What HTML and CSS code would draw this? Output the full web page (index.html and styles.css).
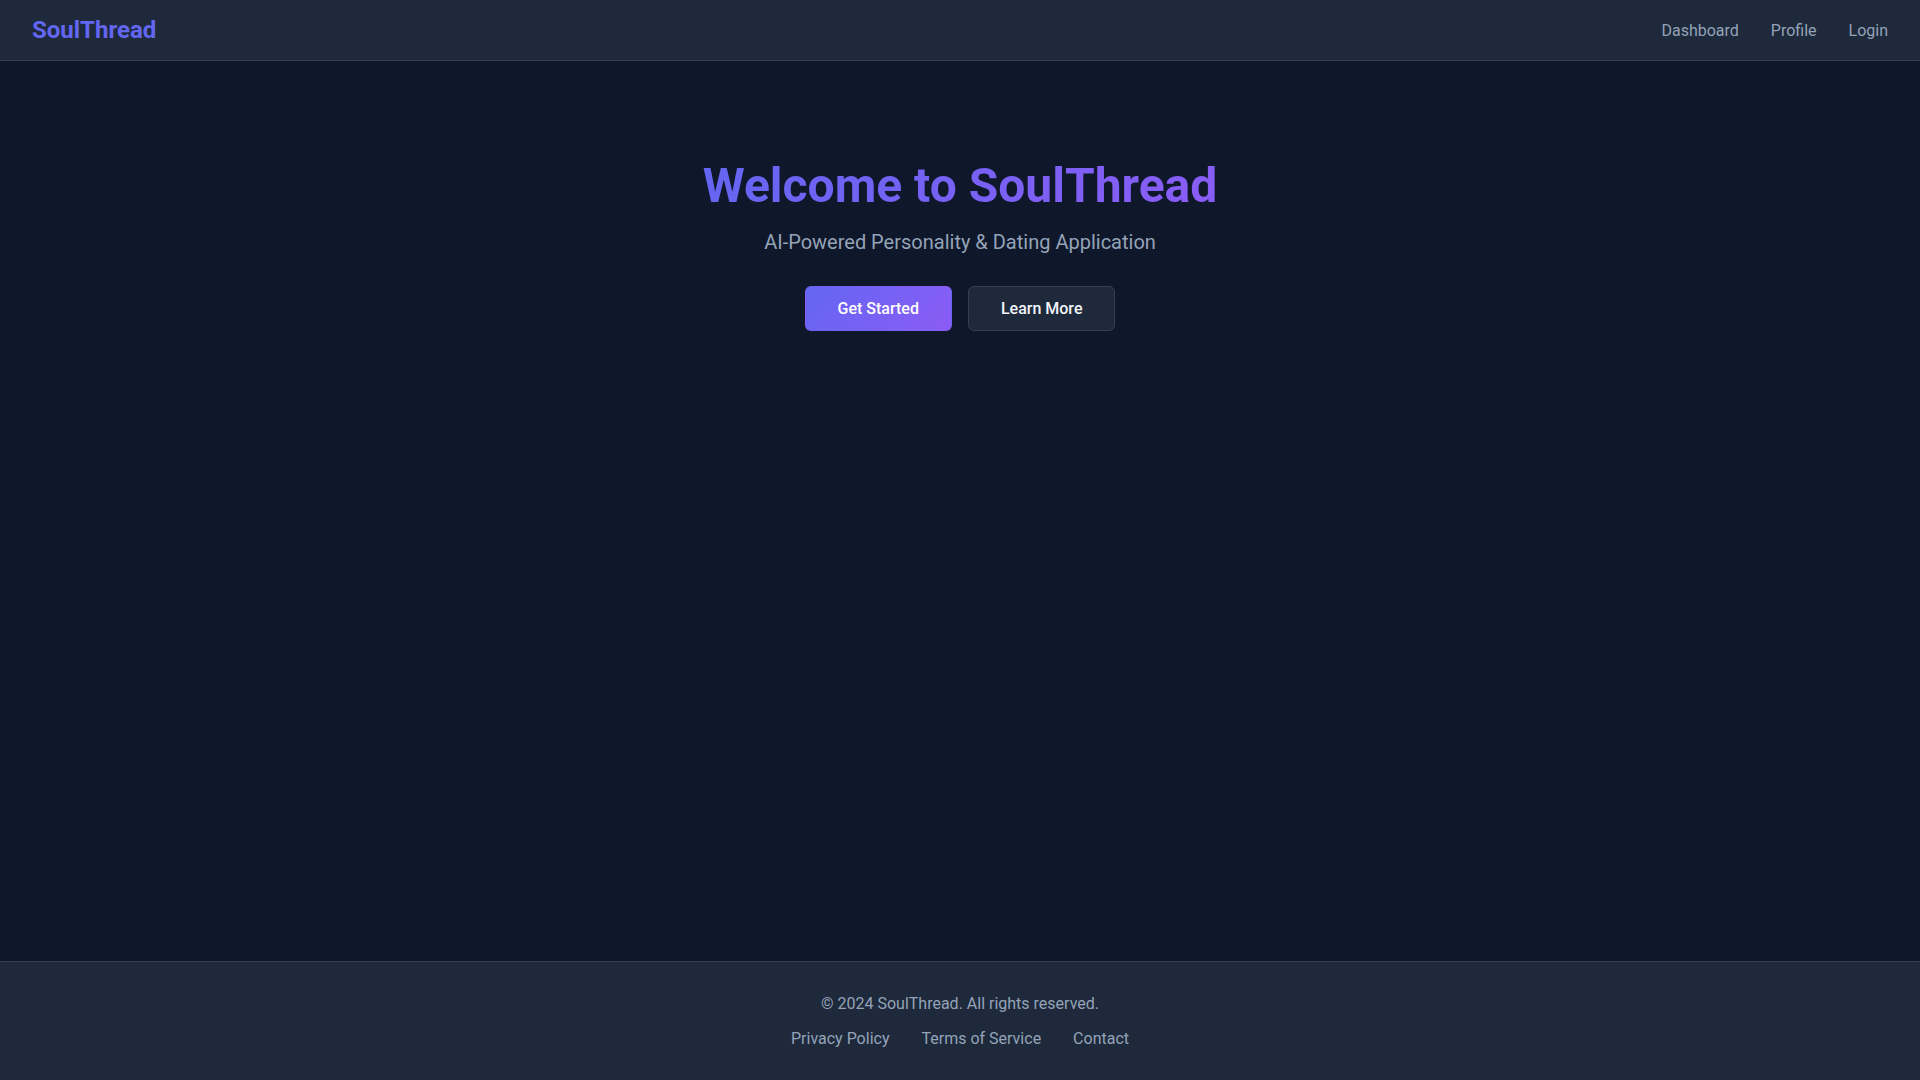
FILE: index.html
```html
<!DOCTYPE html>
<html lang="en">
<head>
<meta charset="utf-8">
<title>SoulThread</title>
<link rel="stylesheet" href="styles.css">
</head>
<body>
<div class="app">
  <header class="topbar">
    <a class="logo" href="#">SoulThread</a>
    <nav class="nav">
      <a href="#">Dashboard</a>
      <a href="#">Profile</a>
      <a href="#">Login</a>
    </nav>
  </header>
  <main class="main">
    <section class="hero">
      <h1 class="hero-title">Welcome to SoulThread</h1>
      <p class="hero-sub">AI-Powered Personality &amp; Dating Application</p>
      <div class="hero-actions">
        <a class="btn btn-primary" href="#">Get Started</a>
        <a class="btn btn-secondary" href="#">Learn More</a>
      </div>
    </section>
  </main>
  <footer class="footer">
    <p class="copyright">© 2024 SoulThread. All rights reserved.</p>
    <div class="footer-links">
      <a href="#">Privacy Policy</a>
      <a href="#">Terms of Service</a>
      <a href="#">Contact</a>
    </div>
  </footer>
</div>
</body>
</html>
```
FILE: styles.css
```css
* { box-sizing: border-box; }
html, body { margin: 0; padding: 0; }
body {
  font-family: Roboto, "Liberation Sans", sans-serif;
  background: #0f172a;
  color: #f1f5f9;
  font-size: 16px;
  line-height: 1.5;
}
a { text-decoration: none; }
.app {
  min-height: 100vh;
  display: flex;
  flex-direction: column;
}
.topbar {
  height: 61px;
  background: #1e293b;
  border-bottom: 1px solid #334155;
  display: flex;
  align-items: center;
  justify-content: space-between;
  padding: 0 32px;
}
.logo {
  font-size: 24px;
  font-weight: 700;
  color: #6366f1;
  line-height: 1;
}
.nav {
  display: flex;
  gap: 32px;
  padding-top: 2px;
}
.nav a {
  color: #94a3b8;
  font-size: 16px;
}
.main {
  flex: 1;
}
.hero {
  padding-top: 96px;
  text-align: center;
}
.hero-title {
  margin: 0 0 12px;
  font-size: 48px;
  font-weight: 700;
  line-height: 1.2;
  display: inline-block;
  background: linear-gradient(135deg, #6366f1, #8b5cf6);
  -webkit-background-clip: text;
  background-clip: text;
  color: transparent;
}
.hero-sub {
  margin: 0 0 29px;
  font-size: 20px;
  line-height: 30px;
  color: #94a3b8;
}
.hero-actions {
  display: flex;
  justify-content: center;
  gap: 16px;
}
.btn {
  display: inline-block;
  padding: 12px 32px;
  border-radius: 6px;
  font-size: 16px;
  font-weight: 500;
  line-height: 19px;
  border: 1px solid transparent;
}
.btn-primary {
  background: linear-gradient(135deg, #6366f1, #8b5cf6);
  color: #ffffff;
}
.btn-secondary {
  background: #1e293b;
  border-color: #334155;
  color: #f1f5f9;
}
.footer {
  background: #1e293b;
  border-top: 1px solid #334155;
  padding: 30px 0 29px;
  text-align: center;
}
.copyright {
  margin: 0 0 11px;
  color: #94a3b8;
  font-size: 16px;
  line-height: 24px;
}
.footer-links {
  display: flex;
  justify-content: center;
  gap: 32px;
}
.footer-links a {
  color: #94a3b8;
  font-size: 16px;
  line-height: 24px;
}
```
